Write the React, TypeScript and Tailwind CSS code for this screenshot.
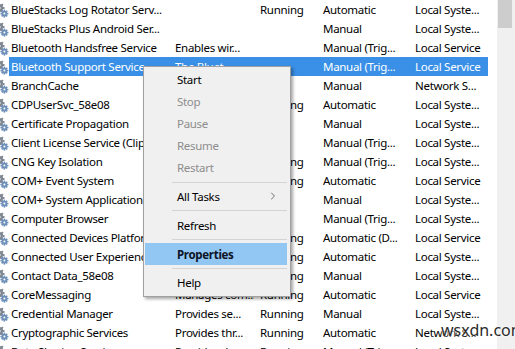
import { ChevronRight } from "lucide-react";

type Svc = {
  name: string;
  desc?: string;
  status?: string;
  startup: string;
  logon: string;
};

const rows: Svc[] = [
  { name: "BlueStacks Log Rotator Serv...", status: "Running", startup: "Automatic", logon: "Local Syste..." },
  { name: "BlueStacks Plus Android Ser...", startup: "Manual", logon: "Local Syste..." },
  { name: "Bluetooth Handsfree Service", desc: "Enables wir...", startup: "Manual (Trig...", logon: "Local Service" },
  { name: "Bluetooth Support Service", desc: "The Bluet...", startup: "Manual (Trig...", logon: "Local Service" },
  { name: "BranchCache", desc: "This service...", startup: "Manual", logon: "Network S..." },
  { name: "CDPUserSvc_58e08", desc: "<Failed to R...", status: "Running", startup: "Automatic", logon: "Local Syste..." },
  { name: "Certificate Propagation", desc: "Copies user ...", startup: "Manual", logon: "Local Syste..." },
  { name: "Client License Service (ClipSVC)", desc: "Provides inf...", startup: "Manual (Trig...", logon: "Local Syste..." },
  { name: "CNG Key Isolation", desc: "The CNG ke...", status: "Running", startup: "Manual (Trig...", logon: "Local Syste..." },
  { name: "COM+ Event System", desc: "Supports Sy...", status: "Running", startup: "Automatic", logon: "Local Service" },
  { name: "COM+ System Application", desc: "Manages th...", startup: "Manual", logon: "Local Syste..." },
  { name: "Computer Browser", desc: "Maintains a...", startup: "Manual (Trig...", logon: "Local Syste..." },
  { name: "Connected Devices Platform Service", desc: "This service...", status: "Running", startup: "Automatic (D...", logon: "Local Service" },
  { name: "Connected User Experiences and Telemetry", desc: "The Connec...", status: "Running", startup: "Automatic", logon: "Local Syste..." },
  { name: "Contact Data_58e08", desc: "Indexes con...", status: "Running", startup: "Manual", logon: "Local Syste..." },
  { name: "CoreMessaging", desc: "Manages com...", status: "Running", startup: "Automatic", logon: "Local Service" },
  { name: "Credential Manager", desc: "Provides se...", status: "Running", startup: "Manual", logon: "Local Syste..." },
  { name: "Cryptographic Services", desc: "Provides thr...", status: "Running", startup: "Automatic", logon: "Network S..." },
  { name: "Data Sharing Service", desc: "Provides da...", status: "Running", startup: "Manual (Trig...", logon: "Local Syste..." },
];

function Gear() {
  const teeth = [0, 45, 90, 135, 180, 225, 270, 315];
  return (
    <svg width="16" height="16" viewBox="0 0 16 16" className="ml-[-7px] shrink-0">
      <g fill="#7f8792">
        {teeth.map((a) => (
          <rect key={a} x="5" y="0.5" width="2" height="3" transform={`rotate(${a} 6 6)`} />
        ))}
        <circle cx="6" cy="6" r="4.2" />
      </g>
      <circle cx="6" cy="6" r="1.6" fill="#fff" />
      <g fill="#6d8fb8">
        {teeth.map((a) => (
          <rect key={a} x="10.6" y="7.6" width="1.6" height="2.2" transform={`rotate(${a} 11.4 11.6)`} />
        ))}
        <circle cx="11.4" cy="11.6" r="2.8" />
      </g>
      <circle cx="11.4" cy="11.6" r="1" fill="#fff" />
    </svg>
  );
}

function Row({ s, selected }: { s: Svc; selected?: boolean }) {
  return (
    <div className="flex h-[19px] shrink-0 items-center">
      <Gear />
      <div
        className={
          "flex h-full w-[479px] items-center " +
          (selected ? "bg-[#3990e6] text-white" : "text-black")
        }
      >
        <div className="w-[160px] shrink-0 overflow-hidden whitespace-nowrap pl-[2px]">{s.name}</div>
        <div className="w-[85px] shrink-0 overflow-hidden whitespace-nowrap pl-[6px]">{s.desc}</div>
        <div className="w-[63px] shrink-0 overflow-hidden whitespace-nowrap pl-[6px]">{s.status}</div>
        <div className="w-[92px] shrink-0 overflow-hidden whitespace-nowrap pl-[6px]">{s.startup}</div>
        <div className="w-[79px] shrink-0 overflow-hidden whitespace-nowrap pl-[6px]">{s.logon}</div>
      </div>
    </div>
  );
}

function MenuItem({
  label,
  disabled,
  active,
  sub,
}: {
  label: string;
  disabled?: boolean;
  active?: boolean;
  sub?: boolean;
}) {
  return (
    <div
      className={
        "flex h-[22px] items-center pl-[32px] pr-[8px] " +
        (active ? "bg-[#93c7f3] font-bold text-[#0c1426]" : disabled ? "text-[#8d8d8d]" : "text-black")
      }
    >
      <span className="flex-1">{label}</span>
      {sub && <ChevronRight className="h-3 w-3 text-[#444]" strokeWidth={1.5} />}
    </div>
  );
}

function Sep() {
  return (
    <div className="flex h-[7px] items-center pl-[27px]">
      <div className="h-px w-full bg-[#d4d4d4]" />
    </div>
  );
}

export default function App() {
  return (
    <div
      className="relative flex h-[349px] w-[515px] overflow-hidden bg-white text-[11.5px] tracking-[-0.3px]"
      style={{ fontFamily: '"Noto Sans", "Open Sans", sans-serif' }}
    >
      {/* Service list */}
      <div className="flex w-[497px] shrink-0 flex-col">
        {rows.map((s, i) => (
          <Row key={s.name} s={s} selected={i === 3} />
        ))}
      </div>

      {/* Scrollbar */}
      <div className="flex w-[18px] shrink-0 flex-col bg-[#f0f0f0] pr-[3px] pl-[1px]">
        <div className="h-[28px] w-full bg-[#cdcdcd]" />
      </div>

      {/* Context menu */}
      <div className="absolute left-[143px] top-[66px] flex h-[231px] w-[148px] flex-col border border-[#a0a0a0] bg-[#f0f0f0] py-[2px] pl-px pr-[3px] shadow-[2px_2px_3px_rgba(0,0,0,0.35)]">
        <MenuItem label="Start" />
        <MenuItem label="Stop" disabled />
        <MenuItem label="Pause" disabled />
        <MenuItem label="Resume" disabled />
        <MenuItem label="Restart" disabled />
        <Sep />
        <MenuItem label="All Tasks" sub />
        <Sep />
        <MenuItem label="Refresh" />
        <Sep />
        <MenuItem label="Properties" active />
        <Sep />
        <MenuItem label="Help" />
      </div>

      {/* Watermark */}
      <div className="absolute left-[441px] top-[318px] text-[16px] tracking-normal text-[#2a2a2a] [text-shadow:0_0_2px_#fff,0_0_2px_#fff]">
        wsxdn.com
      </div>
    </div>
  );
}
